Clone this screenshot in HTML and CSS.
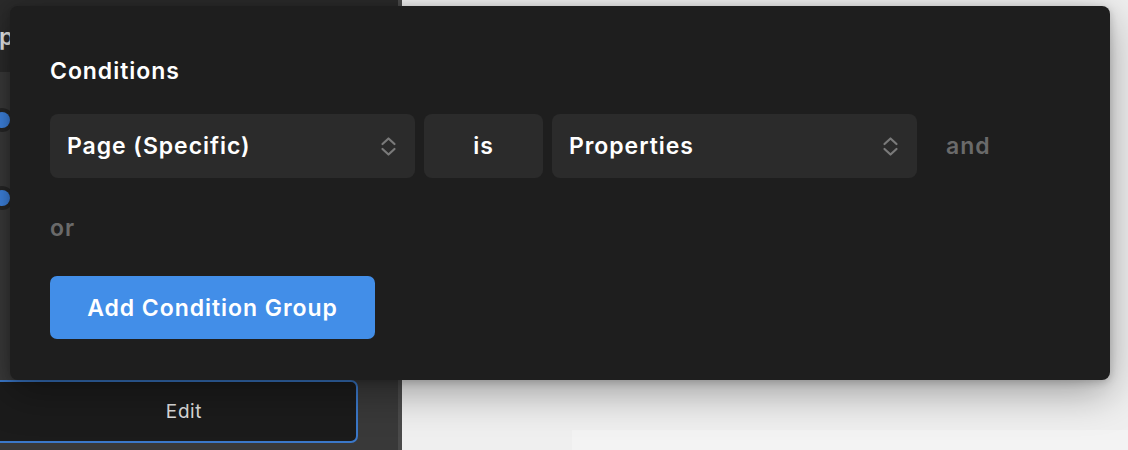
FILE: index.html
```html
<!DOCTYPE html>
<html lang="en">
<head>
  <meta charset="UTF-8" />
  <title>Conditions</title>
  <link rel="stylesheet" href="styles.css">
</head>
<body>
  <div class="app">
    <aside class="sidebar">
      <div class="side-head">
        <h2 class="side-title">pages</h2>
      </div>
      <div class="side-body">
        <div class="toggle-row"><span class="toggle"><span class="knob"></span></span></div>
        <div class="toggle-row"><span class="toggle"><span class="knob"></span></span></div>
        <div class="side-spacer"></div>
        <button class="edit-btn">Edit</button>
      </div>
    </aside>
    <div class="divider"></div>
    <main class="canvas">
      <div class="canvas-card"></div>
    </main>
  </div>

  <div class="popover">
    <h3 class="pop-title">Conditions</h3>
    <div class="cond-row">
      <div class="select wide">
        <span>Page (Specific)</span>
        <svg class="chev" viewBox="0 0 17 21" width="17" height="21"><path d="M2.5 8 L8.5 2.5 L14.5 8 M2.5 13 L8.5 18.5 L14.5 13" /></svg>
      </div>
      <div class="select op">is</div>
      <div class="select wide">
        <span>Properties</span>
        <svg class="chev" viewBox="0 0 17 21" width="17" height="21"><path d="M2.5 8 L8.5 2.5 L14.5 8 M2.5 13 L8.5 18.5 L14.5 13" /></svg>
      </div>
      <span class="joiner and">and</span>
    </div>
    <div class="joiner or">or</div>
    <button class="add-btn">Add Condition Group</button>
  </div>
</body>
</html>
```
FILE: styles.css
```css
body {
  margin: 0;
  padding: 0;
  font-family: 'Inter', 'Noto Sans', sans-serif;
  background: #efefef;
  overflow: hidden;
  height: 450px;
}
.app {
  display: flex;
  height: 450px;
}
.sidebar {
  width: 398px;
  background: #393939;
  display: flex;
  flex-direction: column;
}
.side-head {
  height: 72px;
  background: #2a2a2a;
  display: flex;
  align-items: center;
}
.side-title {
  margin: 0 0 0 -1px;
  font-size: 24px;
  font-weight: 600;
  color: #e6e6e6;
}
.side-body {
  flex: 1;
  display: flex;
  flex-direction: column;
  padding-top: 36px;
}
.toggle-row {
  height: 78px;
}
.toggle {
  display: block;
  width: 24px;
  height: 24px;
  margin-left: -10px;
  border-radius: 50%;
  background: #262626;
  padding: 4px;
  box-sizing: border-box;
}
.knob {
  display: block;
  width: 16px;
  height: 16px;
  border-radius: 50%;
  background: #3d82de;
}
.side-spacer {
  flex: 1;
}
.edit-btn {
  margin: 0 0 7px -10px;
  width: 368px;
  height: 63px;
  background: #1b1b1b;
  border: 2px solid #3b78c9;
  border-radius: 7px;
  color: #dedede;
  font-family: 'Inter', 'Noto Sans', sans-serif;
  font-size: 19px;
  letter-spacing: 0.6px;
  padding-left: 26px;
}
.divider {
  width: 4px;
  background: #4a4a4a;
}
.canvas {
  flex: 1;
  display: flex;
  flex-direction: column;
  justify-content: flex-end;
}
.canvas-card {
  height: 20px;
  margin-left: 170px;
  background: #f3f3f3;
}
.popover {
  position: absolute;
  left: 10px;
  top: 6px;
  width: 1100px;
  height: 374px;
  box-sizing: border-box;
  padding: 53px 40px 0 40px;
  background: #1e1e1e;
  border-radius: 8px;
  box-shadow: 0 12px 40px rgba(0,0,0,0.35), 0 2px 8px rgba(0,0,0,0.2);
  letter-spacing: 0.95px;
}
.pop-title {
  margin: 0;
  line-height: 24px;
  font-size: 23px;
  font-weight: 600;
  color: #fff;
}
.cond-row {
  margin-top: 31px;
  display: flex;
  align-items: center;
  gap: 9px;
}
.select {
  height: 64px;
  background: #2b2b2b;
  border-radius: 8px;
  display: flex;
  align-items: center;
  box-sizing: border-box;
  font-size: 23px;
  font-weight: 600;
  color: #fff;
}
.select.wide {
  width: 365px;
  padding: 0 18px 0 17px;
  justify-content: space-between;
}
.select.op {
  width: 119px;
  justify-content: center;
}
.chev {
  fill: none;
  stroke: #7a7a7a;
  stroke-width: 2.2;
  stroke-linecap: round;
  stroke-linejoin: round;
}
.joiner {
  font-size: 23px;
  font-weight: 600;
  color: #6a6a6a;
}
.joiner.and {
  margin-left: 20px;
}
.joiner.or {
  margin-top: 38px;
  line-height: 24px;
}
.add-btn {
  display: block;
  margin-top: 36px;
  width: 325px;
  height: 63px;
  background: #428ee8;
  border: none;
  border-radius: 7px;
  color: #fff;
  font-family: 'Inter', 'Noto Sans', sans-serif;
  font-size: 23px;
  font-weight: 600;
  letter-spacing: 0.95px;
}
```
